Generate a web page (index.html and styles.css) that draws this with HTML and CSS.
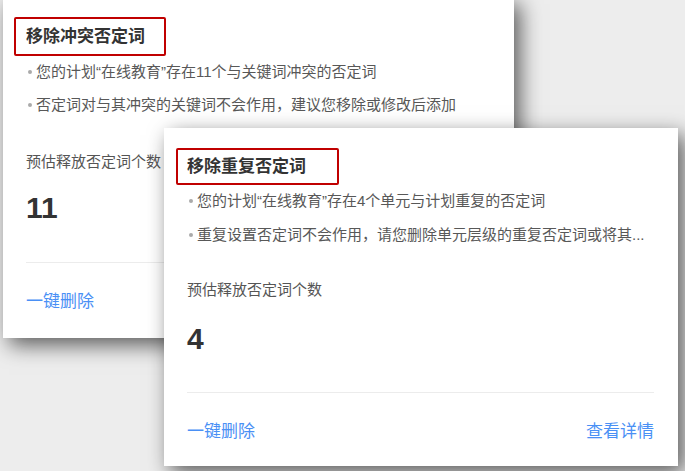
FILE: index.html
```html
<!DOCTYPE html>
<html lang="zh-CN">
<head>
<meta charset="utf-8">
<title>否定词优化</title>
<link rel="stylesheet" href="styles.css">
</head>
<body>
<div class="stage">
  <section class="card card-conflict">
    <div class="title-box">
      <h2 class="title">移除冲突否定词</h2>
    </div>
    <ul class="notes">
      <li>您的计划“在线教育”存在11个与关键词冲突的否定词</li>
      <li>否定词对与其冲突的关键词不会作用，建议您移除或修改后添加</li>
    </ul>
    <div class="label">预估释放否定词个数</div>
    <div class="count">11</div>
    <div class="divider"></div>
    <div class="actions">
      <a class="link">一键删除</a>
    </div>
  </section>

  <section class="card card-repeat">
    <div class="title-box">
      <h2 class="title">移除重复否定词</h2>
    </div>
    <ul class="notes">
      <li>您的计划“在线教育”存在4个单元与计划重复的否定词</li>
      <li>重复设置否定词不会作用，请您删除单元层级的重复否定词或将其...</li>
    </ul>
    <div class="label">预估释放否定词个数</div>
    <div class="count">4</div>
    <div class="divider"></div>
    <div class="actions">
      <a class="link">一键删除</a>
      <a class="link">查看详情</a>
    </div>
  </section>
</div>
</body>
</html>
```

FILE: styles.css
```css
html, body {
  margin: 0;
  padding: 0;
}

body {
  background: #ededed;
  width: 685px;
  height: 471px;
  overflow: hidden;
  font-family: "Liberation Sans", "Noto Sans CJK SC", sans-serif;
}

.stage {
  position: relative;
  width: 685px;
  height: 471px;
}

.card {
  position: absolute;
  box-sizing: border-box;
  background: #fff;
  padding: 20px 24px 0 23px;
  display: flex;
  flex-direction: column;
  box-shadow: 6px 7px 20px rgba(0, 0, 0, 0.62);
}

.card-conflict {
  left: 3px;
  top: -3px;
  width: 511px;
  height: 341px;
}

.card-repeat {
  left: 164px;
  top: 128px;
  width: 514px;
  height: 338px;
}

.title-box {
  align-self: flex-start;
  border: 2px solid #c00000;
  border-radius: 2px;
  margin-left: -11px;
  padding: 0 31px 0 9px;
  height: 33px;
  display: flex;
  align-items: center;
}

.card-conflict .title-box {
  margin-left: -12px;
  padding: 0 19px 0 10px;
  height: 35px;
}

.title {
  margin: 0;
  font-size: 17px;
  font-weight: bold;
  color: #333;
  line-height: 20px;
}

.notes {
  list-style: none;
  margin: 6px 0 0 0;
  padding: 0;
  display: flex;
  flex-direction: column;
  gap: 14px;
}

.card-conflict .notes {
  margin-top: 6px;
  gap: 13px;
}

.notes li {
  display: flex;
  align-items: center;
  gap: 4px;
  font-size: 15px;
  line-height: 20px;
  color: #585858;
  white-space: nowrap;
}

.notes li::before {
  content: "";
  width: 4px;
  height: 4px;
  border-radius: 50%;
  background: #aaa;
  margin-left: 2px;
  flex: none;
}

.label {
  margin-top: 35px;
  font-size: 15px;
  line-height: 20px;
  color: #555;
}

.card-conflict .label {
  margin-top: 37px;
}

.count {
  margin-top: 21px;
  font-family: "Liberation Sans", sans-serif;
  font-weight: bold;
  font-size: 30px;
  line-height: 36px;
  color: #333;
}

.card-conflict .count {
  margin-top: 18px;
}

.divider {
  margin-top: 35px;
  height: 1px;
  background: #ececec;
}

.card-conflict .divider {
  margin-top: 36px;
}

.actions {
  margin-top: 27px;
  display: flex;
  justify-content: space-between;
}

.link {
  font-size: 17px;
  line-height: 24px;
  color: #4a90f5;
  cursor: pointer;
}
```
